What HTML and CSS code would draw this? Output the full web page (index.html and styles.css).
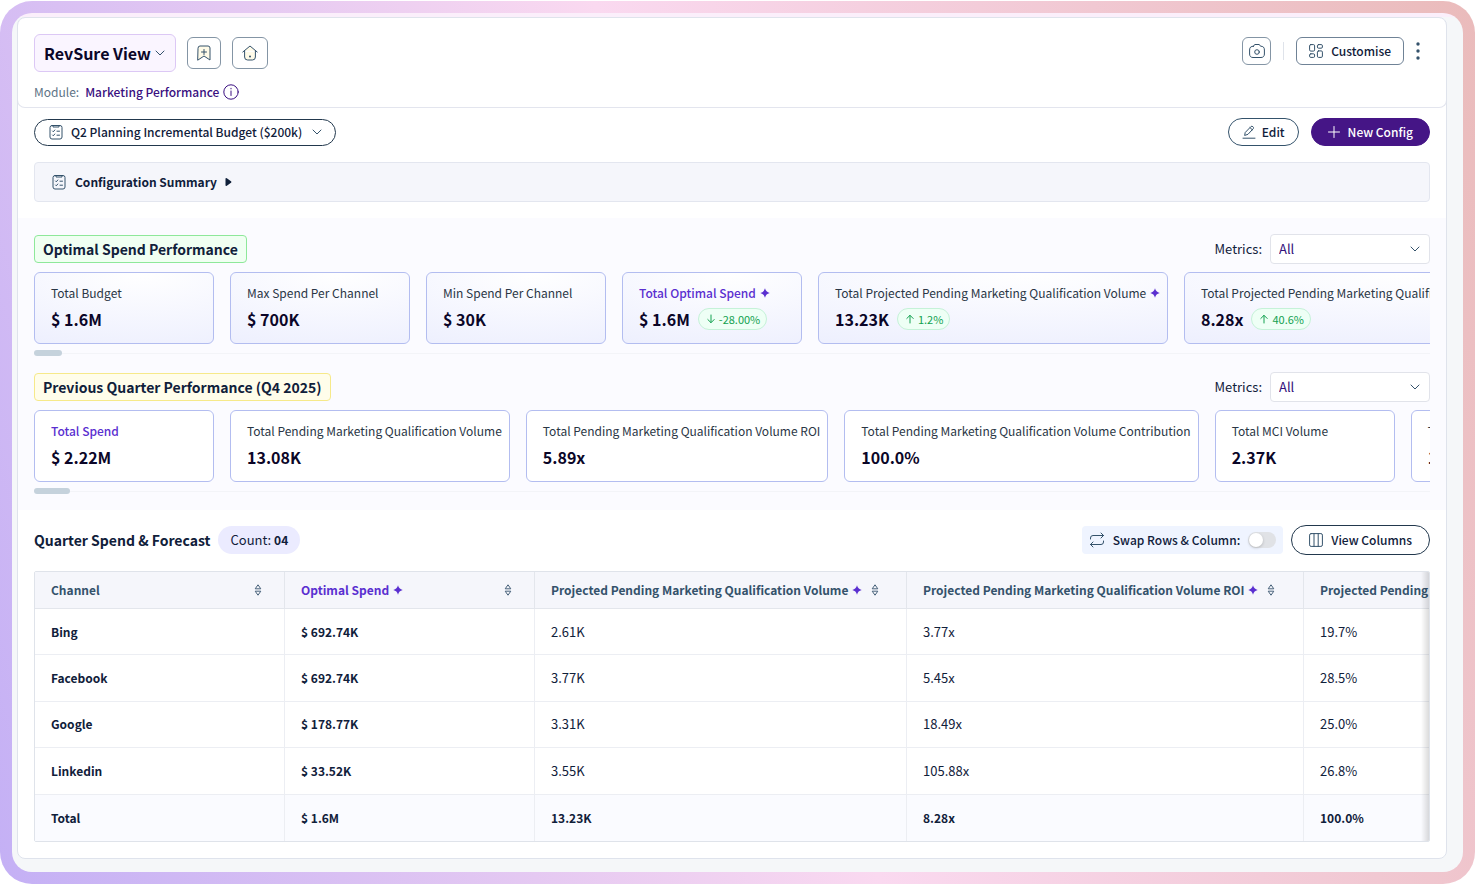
FILE: index.html
```html
<!DOCTYPE html>
<html lang="en">
  <head>
    <meta charset="utf-8">
    <meta name="viewport" content="width=device-width, initial-scale=1">
    <title>RevSure View</title>
    <link rel="stylesheet" href="styles.css">
  </head>
<body>

<!-- shared icons -->
<svg class="sprite" aria-hidden="true">
  <symbol id="chevron" viewBox="0 0 12 12"><path d="M2 4l4 4 4-4"/></symbol>
  <symbol id="clipboard" viewBox="0 0 16 16"><rect x="2" y="1.500" width="12" height="13.500" rx="2"/><path d="M5 1.500v1.500h6V1.500M4.500 7l.8.8L6.800 6M4.500 11l.8.8L6.800 10M9 7.200h2.500M9 11.200h2.500"/></symbol>
  <symbol id="spark" viewBox="0 0 10 10"><path d="M5 .3Q5.900 4.100 9.700 5 5.900 5.900 5 9.700 4.100 5.900 .3 5 4.100 4.100 5 .3z"/></symbol>
  <symbol id="sort" viewBox="0 0 8 12"><path d="M4 .8L6.800 4.800H1.200zM4 11.200L6.800 7.200H1.200z"/></symbol>
  <symbol id="arrow-up" viewBox="0 0 10 10"><path d="M5 9V1.500M1.800 4.500L5 1.300l3.200 3.200"/></symbol>
  <symbol id="arrow-down" viewBox="0 0 10 10"><path d="M5 1v7.500M1.800 5.500L5 8.700l3.200-3.200"/></symbol>
</svg>

<div class="frame">
<div class="screen">
<main class="panel">

  <header class="header">
    <div class="header-row">
      <div class="group title-group">
        <div class="picker picker-title">
          <select aria-label="View"><option>RevSure View</option></select>
          <svg class="icon icon-12"><use href="#chevron"/></svg>
        </div>
        <button class="icon-btn bookmark" aria-label="Save view">
          <svg class="icon icon-16" viewBox="0 0 16 16"><path class="cream" d="M2 3a2 2 0 0 1 2-2h8a2 2 0 0 1 2 2v12l-6-4-6 4z"/><path d="M8 4.500v5M5.500 7h5"/></svg>
        </button>
        <button class="icon-btn home" aria-label="Home">
          <svg class="icon icon-16" viewBox="0 0 16 16"><path class="cream" d="M.8 7L8 1l7.200 6M2.600 5.800V12a3 3 0 0 0 3 3h4.800a3 3 0 0 0 3-3V5.800"/><circle class="dot" cx="8" cy="11.500" r="1"/></svg>
        </button>
      </div>
      <div class="group header-tools">
        <button class="icon-btn camera" aria-label="Screenshot">
          <svg class="icon icon-16" viewBox="0 0 16 16"><path d="M4.500 3.200L5.700 1.500h4.600l1.200 1.700c2.600 0 3.900 1.100 3.900 3.800v4c0 2.200-1.200 3.500-3.400 3.500H4C1.800 14.500.6 13.200.6 11V7c0-2.700 1.300-3.800 3.900-3.800z"/><circle cx="8" cy="9" r="2.300"/></svg>
        </button>
        <span class="divider"></span>
        <button class="btn customise">
          <svg class="icon icon-14" viewBox="0 0 14 14"><rect x=".6" y=".6" width="5" height="6.500" rx="1.200"/><rect x="8.400" y=".6" width="5" height="3.600" rx="1.200"/><rect x=".6" y="9.800" width="5" height="3.600" rx="1.200"/><rect x="8.400" y="6.900" width="5" height="6.500" rx="1.200"/></svg>
          Customise
        </button>
        <button class="kebab" aria-label="More"><svg viewBox="0 0 4 18"><circle cx="2" cy="2" r="1.700"/><circle cx="2" cy="9" r="1.700"/><circle cx="2" cy="16" r="1.700"/></svg></button>
      </div>
    </div>
    <p class="module">Module: <a href="#">Marketing Performance</a>
      <svg class="icon icon-16 info" viewBox="0 0 16 16"><circle cx="8" cy="8" r="7.200"/><path d="M8 7v4.500M8 4.300v.6"/></svg>
    </p>
  </header>

  <section class="config">
    <div class="bar">
      <div class="picker picker-config">
        <svg class="icon icon-16 lead"><use href="#clipboard"/></svg>
        <select aria-label="Configuration"><option>Q2 Planning Incremental Budget ($200k)</option></select>
        <svg class="icon icon-12"><use href="#chevron"/></svg>
      </div>
      <div class="group">
        <button class="btn pill edit">
          <svg class="icon icon-14" viewBox="0 0 14 14"><path d="M3.500 7.200L9 1.500c1-1 3.300.8 2.300 2.100L6 9.300l-3 1zM8 2.600l2.300 2.200M1 13.200h12"/></svg>
          Edit
        </button>
        <button class="btn pill primary">
          <svg class="icon icon-12" viewBox="0 0 12 12"><path d="M6 .5v11M.5 6h11"/></svg>
          New Config
        </button>
      </div>
    </div>
    <button class="summary">
      <svg class="icon icon-16"><use href="#clipboard"/></svg>
      Configuration Summary
      <svg class="caret" viewBox="0 0 7 10"><path d="M.5 2Q.5.300 1.800 1.200L6 4.200Q7 5 6 5.800L1.800 8.800Q.5 9.700.5 8z"/></svg>
    </button>
  </section>

  <section class="performance">
    <div class="bar">
      <h2 class="tag tag-green">Optimal Spend Performance</h2>
      <div class="metrics">
        <label for="metrics-optimal">Metrics:</label>
        <div class="picker picker-metrics">
          <select id="metrics-optimal"><option>All</option></select>
          <svg class="icon icon-12"><use href="#chevron"/></svg>
        </div>
      </div>
    </div>
    <div class="cards cards-tinted">
      <div class="card"><p class="card-label">Total Budget</p><p class="card-value">$ 1.6M</p></div>
      <div class="card"><p class="card-label">Max Spend Per Channel</p><p class="card-value">$ 700K</p></div>
      <div class="card"><p class="card-label">Min Spend Per Channel</p><p class="card-value">$ 30K</p></div>
      <div class="card">
        <p class="card-label key">Total Optimal Spend <svg class="spark"><use href="#spark"/></svg></p>
        <p class="card-value">$ 1.6M <span class="change"><svg class="icon"><use href="#arrow-down"/></svg>-28.00%</span></p>
      </div>
      <div class="card">
        <p class="card-label">Total Projected Pending Marketing Qualification Volume <svg class="spark"><use href="#spark"/></svg></p>
        <p class="card-value">13.23K <span class="change"><svg class="icon"><use href="#arrow-up"/></svg>1.2%</span></p>
      </div>
      <div class="card">
        <p class="card-label">Total Projected Pending Marketing Qualification Volume ROI <svg class="spark"><use href="#spark"/></svg></p>
        <p class="card-value">8.28x <span class="change"><svg class="icon"><use href="#arrow-up"/></svg>40.6%</span></p>
      </div>
    </div>
    <div class="track"><span class="thumb"></span></div>

    <div class="bar">
      <h2 class="tag tag-yellow">Previous Quarter Performance (Q4 2025)</h2>
      <div class="metrics">
        <label for="metrics-previous">Metrics:</label>
        <div class="picker picker-metrics">
          <select id="metrics-previous"><option>All</option></select>
          <svg class="icon icon-12"><use href="#chevron"/></svg>
        </div>
      </div>
    </div>
    <div class="cards">
      <div class="card"><p class="card-label key">Total Spend</p><p class="card-value">$ 2.22M</p></div>
      <div class="card"><p class="card-label">Total Pending Marketing Qualification Volume</p><p class="card-value">13.08K</p></div>
      <div class="card"><p class="card-label">Total Pending Marketing Qualification Volume ROI</p><p class="card-value">5.89x</p></div>
      <div class="card"><p class="card-label">Total Pending Marketing Qualification Volume Contribution</p><p class="card-value">100.0%</p></div>
      <div class="card"><p class="card-label">Total MCI Volume</p><p class="card-value">2.37K</p></div>
      <div class="card"><p class="card-label">Total</p><p class="card-value">1</p></div>
    </div>
    <div class="track"><span class="thumb thumb-wide"></span></div>
  </section>

  <section class="forecast">
    <div class="bar">
      <div class="group heading">
        <h2>Quarter Spend &amp; Forecast</h2>
        <span class="count">Count: <b>04</b></span>
      </div>
      <div class="group table-tools">
        <label class="swap" for="swap">
          <svg class="icon icon-16" viewBox="0 0 16 16"><path d="M1.500 7V6a2.500 2.500 0 0 1 2.500-2.500h10.500M12 1l2.500 2.500L12 6M14.500 9v1a2.500 2.500 0 0 1-2.500 2.500H1.500M4 15l-2.500-2.500L4 10"/></svg>
          Swap Rows &amp; Column:
          <input type="checkbox" id="swap" class="switch">
        </label>
        <button class="btn pill columns">
          <svg class="icon icon-14" viewBox="0 0 14 14"><rect x=".6" y=".6" width="12.800" height="12.800" rx="1.500"/><path d="M5 .6v12.800M9.200.6v12.800"/></svg>
          View Columns
        </button>
      </div>
    </div>

    <div class="table-wrap">
      <table>
        <colgroup><col class="c-name"><col class="c-name"><col class="c-volume"><col class="c-roi"><col class="c-volume"></colgroup>
        <thead>
          <tr>
            <th><div class="th spread">Channel <svg class="sort"><use href="#sort"/></svg></div></th>
            <th><div class="th spread key"><span>Optimal Spend <svg class="spark"><use href="#spark"/></svg></span> <svg class="sort"><use href="#sort"/></svg></div></th>
            <th><div class="th"><span>Projected Pending Marketing Qualification Volume <svg class="spark"><use href="#spark"/></svg></span> <svg class="sort"><use href="#sort"/></svg></div></th>
            <th><div class="th"><span>Projected Pending Marketing Qualification Volume ROI <svg class="spark"><use href="#spark"/></svg></span> <svg class="sort"><use href="#sort"/></svg></div></th>
            <th><div class="th">Projected Pending Marketing Contribution</div></th>
          </tr>
        </thead>
        <tbody>
          <tr><td>Bing</td><td>$ 692.74K</td><td>2.61K</td><td>3.77x</td><td>19.7%</td></tr>
          <tr><td>Facebook</td><td>$ 692.74K</td><td>3.77K</td><td>5.45x</td><td>28.5%</td></tr>
          <tr><td>Google</td><td>$ 178.77K</td><td>3.31K</td><td>18.49x</td><td>25.0%</td></tr>
          <tr><td>Linkedin</td><td>$ 33.52K</td><td>3.55K</td><td>105.88x</td><td>26.8%</td></tr>
          <tr class="total"><td>Total</td><td>$ 1.6M</td><td>13.23K</td><td>8.28x</td><td>100.0%</td></tr>
        </tbody>
      </table>
    </div>
  </section>

</main>
</div>
</div>
</body>
</html>
```
FILE: styles.css
```css
* {box-sizing: border-box;}

body {margin: 0;padding: 1px 0;background: #fff;color: #10203a;font-family: "Noto Sans CJK SC", "Noto Sans", sans-serif;font-size: 13px;line-height: 20px;}
h2, p {margin: 0;}
button, select, input {font: inherit;color: inherit;margin: 0;}
button {cursor: pointer;}
.sprite {position: absolute;width: 0;height: 0;}

/* gradient frame round the app */
.frame {padding: 12px;border-radius: 32px;background: linear-gradient(72deg, #c4b0f5, #fad9f0 50%, #eabbbb);}
.screen {padding: 4px 16px 13px 5px;border-radius: 20px;overflow: hidden;background: linear-gradient(#fbeffb 4px, #f5f7f9 4px);}
.panel {border: 1px solid #dfe3ec;border-radius: 8px;background: #fff;overflow: hidden;}

/* icons */
.icon {fill: none;stroke: #34526b;stroke-linecap: round;stroke-linejoin: round;flex: none;}
.icon-12 {width: 12px;height: 12px;}
.icon-14 {width: 14px;height: 14px;}
.icon-16 {width: 16px;height: 16px;}
.cream {fill: #fffbe8;}
.dot {fill: #34526b;stroke: none;}
.spark {width: 10px;height: 10px;margin-left: 1px;fill: #5a2fd0;}
.sort {width: 8px;height: 12px;fill: none;stroke: #48627a;stroke-linejoin: round;flex: none;}

/* shared rows and buttons */
.bar {display: flex;align-items: center;justify-content: space-between;}
.group {display: flex;align-items: center;gap: 12px;}
.btn {display: flex;align-items: center;justify-content: center;gap: 8px;height: 28px;padding: 0 12px;border: 1px solid #6f8296;border-radius: 6px;background: #fff;font-size: 12px;font-weight: 500;}
.pill {border-color: #34526b;border-radius: 15px;}
.icon-btn {display: flex;align-items: center;justify-content: center;height: 32px;padding: 0;border: 1px solid #8495a5;border-radius: 6px;background: #fff;}

/* select with its own chevron */
.picker {display: flex;align-items: center;position: relative;}
.picker select {appearance: none;border: 0;background: none;outline: 0;cursor: pointer;}
.picker .icon {position: absolute;right: 12px;pointer-events: none;}
.picker .lead {left: 13px;right: auto;}
.picker-title {height: 38px;border: 1px solid #dcc8f5;border-radius: 6px;background: #faf5ff;}
.picker-title select {height: 36px;padding: 0 24px 0 9px;font-size: 16px;font-weight: 600;color: #0b0628;}
.picker-title .icon {right: 9px;}
.picker-config {height: 27px;border: 1px solid #22384d;border-radius: 14px;}
.picker-config select {height: 25px;padding: 0 32px 0 36px;font-size: 12px;font-weight: 500;}
.picker-metrics {width: 160px;height: 30px;border: 1px solid #e1e3ea;border-radius: 4px;background: #fff;}
.picker-metrics select {width: 100%;height: 28px;padding: 0 8px;color: #33107a;}
.picker-metrics .icon {right: 8px;}

/* header */
.header {margin: 0 -1px;padding: 16px 16px 5px;border: 1px solid #e3e5ee;border-top: 0;border-radius: 8px;}
.header-row {display: flex;justify-content: space-between;align-items: flex-start;}
.title-group {gap: 11px;}
.bookmark {width: 34px;}
.home {width: 36px;}
.header-tools {margin-top: 3px;padding-right: 8px;}
.camera {width: 29px;height: 28px;}
.divider {width: 1px;height: 18px;background: #dfe3ea;}
.customise {padding: 0 12px;}
.kebab {width: 6px;height: 20px;padding: 0;border: 0;background: none;}
.kebab svg {display: block;width: 4px;height: 18px;fill: #34526b;}
.module {display: flex;align-items: center;gap: 6px;margin-top: 10px;font-size: 12px;color: #5d7385;}
.module a {color: #3a0f80;font-weight: 500;text-decoration: none;}
.info {margin-left: -2px;stroke: #3a0f80;}

/* configuration */
.config {padding: 10px 16px 16px;}
.primary {border-color: #451586;background: #451586;color: #fff;padding: 0 16px;}
.primary .icon {stroke: #fff;}
.edit {gap: 6px;padding: 0 13px;}
.summary {display: flex;align-items: center;gap: 8px;width: 100%;height: 40px;margin-top: 16px;padding: 0 16px;border: 1px solid #e3e6ef;border-radius: 4px;background: #f5f6fb;font-size: 12px;font-weight: 600;}
.caret {width: 7px;height: 10px;fill: #10203a;}

/* metric cards */
.performance {padding: 16px;background: #fbfbff;}
.tag {height: 28px;padding: 0 8px;border: 1px solid;border-radius: 4px;font-size: 14px;font-weight: 600;line-height: 26px;}
.tag-green {border-color: #8ee89a;background: #f0fff2;}
.tag-yellow {border-color: #f6e98a;background: #fffdea;}
.metrics {display: flex;align-items: center;gap: 8px;}
.cards {display: flex;gap: 16px;margin-top: 8px;overflow: hidden;}
.card {flex: none;min-width: 180px;height: 72px;padding: 10px 7px 10px 16px;border: 1px solid #b3bdf0;border-radius: 6px;background: #fff;white-space: nowrap;}
.cards-tinted .card {background: radial-gradient(120% 110% at 60% 0, #fff, #eef0fe);}
.card-label {font-size: 12px;color: #2a3645;}
.card-value {display: flex;align-items: center;gap: 8px;height: 22px;margin-top: 5px;font-size: 16px;font-weight: 600;color: #0b0628;}
.key {color: #5a2fd0;font-weight: 600;}
.card-label.key {font-weight: 500;}
.change {display: flex;align-items: center;gap: 3px;height: 22px;padding: 0 6px 0 7px;border: 1px solid #c5f2d8;border-radius: 11px;background: #eefff5;color: #12a150;font-size: 11px;font-weight: 400;}
.change .icon {width: 10px;height: 10px;stroke: #12a150;}
.track {display: flex;align-items: center;height: 6px;margin: 6px 0 16px;background: linear-gradient(#f3f4f8, #f3f4f8) center / 100% 1px no-repeat;}
.thumb {width: 28px;height: 6px;border-radius: 3px;background: #c5d2dc;}
.thumb-wide {width: 36px;}
.track:last-child {margin-bottom: 0;}

/* forecast table */
.forecast {padding: 15px 16px 16px;}
.heading {gap: 8px;}
.heading h2 {font-size: 14px;font-weight: 600;line-height: 22px;}
.count {height: 28px;padding: 0 12px;border-radius: 14px;background: #ebebff;line-height: 28px;}
.count b {font-size: 12px;}
.table-tools {gap: 8px;}
.swap {display: flex;align-items: center;gap: 8px;height: 28px;padding: 0 7px;border-radius: 4px;background: #eff4ff;font-size: 12px;font-weight: 500;}
.switch {appearance: none;width: 28px;height: 16px;padding: 1px;border-radius: 8px;background: #e0e2e6;cursor: pointer;}
.switch:before {content: '';display: block;width: 14px;height: 14px;border-radius: 50%;background: #fff;box-shadow: 0 1px 3px #0003;}
.switch:checked {padding-left: 13px;background: #451586;}
.columns {height: 30px;padding: 0 17px;border-color: #22384d;}
.table-wrap {position: relative;margin-top: 16px;border: 1px solid #dfe3ea;border-radius: 2px;overflow: hidden;}
.table-wrap:after {content: '';position: absolute;top: 0;right: 0;bottom: 0;width: 8px;background: linear-gradient(to right, #0000, #00000024);} /* more columns to the right */
table {width: 1641px;height: 269px;table-layout: fixed;border-collapse: separate;border-spacing: 0;}
.c-name {width: 250px;}
.c-volume {width: 372px;}
.c-roi {width: 397px;}
th, td {height: 46px;padding: 0 16px;border-right: 1px solid #eceef3;border-bottom: 1px solid #eceef3;text-align: left;white-space: nowrap;}
th {height: 37px;background: #f5f6fb;color: #34526b;font-size: 12px;font-weight: 600;border-color: #e3e6ec;}
.th {display: flex;align-items: center;gap: 9px;}
.spread {justify-content: space-between;padding-right: 6px;}
.th.key {color: #5a2fd0;}
td:nth-child(-n+2), .total td {font-size: 12px;font-weight: 600;}
.total td {background: #fafbff;border-bottom: 0;}
```
